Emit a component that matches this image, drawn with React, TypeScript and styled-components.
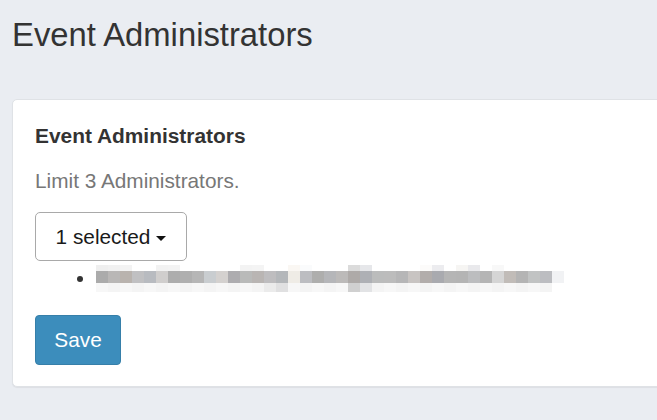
import React from "react";
import styled, { createGlobalStyle } from "styled-components";

const GlobalStyle = createGlobalStyle`
  html, body {
    margin: 0;
    padding: 0;
    background: #eaedf2;
    overflow: hidden;
  }
  body {
    font-family: "Liberation Sans", Arial, Helvetica, sans-serif;
  }
  * { box-sizing: border-box; }
`;

const Page = styled.div`
  height: 420px;
  padding: 17px 0 0 12px;
  overflow: hidden;
`;

const Title = styled.h1`
  margin: 0;
  font-size: 32.8px;
  line-height: 36px;
  font-weight: 400;
  color: #333;
`;

const Card = styled.section`
  margin-top: 46px;
  margin-right: -30px;
  background: #fff;
  border: 1px solid #dfe2e6;
  border-radius: 5px;
  box-shadow: 0 1px 1px rgba(0, 0, 0, 0.06);
  padding: 24px 0 21px 22px;
  display: flex;
  flex-direction: column;
  align-items: flex-start;
`;

const CardHeading = styled.h3`
  margin: 0;
  font-size: 20.9px;
  line-height: 24px;
  font-weight: 700;
  color: #333;
`;

const Hint = styled.p`
  margin: 21px 0 0;
  font-size: 20.8px;
  line-height: 24px;
  color: #777;
`;

const DropdownButton = styled.button`
  margin-top: 19px;
  width: 152px;
  height: 49px;
  display: flex;
  align-items: center;
  justify-content: center;
  gap: 6px;
  background: #fff;
  border: 1px solid #a9a9a9;
  border-radius: 5px;
  font-family: inherit;
  font-size: 20.8px;
  line-height: 24px;
  color: #1a1a1a;
  padding: 0;
  cursor: pointer;
`;

const Caret = styled.span`
  display: inline-block;
  width: 0;
  height: 0;
  margin-top: 3px;
  border-top: 5px solid #111;
  border-left: 5.5px solid transparent;
  border-right: 5.5px solid transparent;
`;

const SelectedList = styled.ul`
  margin: 4px 0 0;
  padding: 0;
  list-style: none;
`;

const SelectedItem = styled.li`
  display: flex;
  align-items: center;
  padding-left: 42px;
  height: 27px;
`;

const Bullet = styled.span`
  width: 6px;
  height: 6px;
  border-radius: 50%;
  background: #333;
  margin-right: 13px;
  flex: none;
`;

const SaveButton = styled.button`
  margin-top: 23px;
  width: 86px;
  height: 50px;
  background: #3c8dbc;
  border: 1px solid #367fa9;
  border-radius: 4px;
  color: #fff;
  font-family: inherit;
  font-size: 20.8px;
  line-height: 24px;
  padding: 0;
  cursor: pointer;
`;

const mid = [
  "#ababab", "#b9b7b6", "#b9b3ae", "#c0c0c2", "#b8bbc0", "#d0cecd", "#adadad",
  "#afafaf", "#b6b6b6", "#c9cdd0", "#d4d1cf", "#adacaf", "#b9bab9", "#b9b5b3",
  "#bebdbf", "#b4b7ba", "#efece6", "#bcbdc1", "#aeaead", "#b5b6b9", "#bcbab9",
  "#aeaaa8", "#aeb0b5", "#bbbcbc", "#bcbcbc", "#b6b6b7", "#c8c4c2", "#b2adab",
  "#a9aaaf", "#b5b5b5", "#b4b4b4", "#bcbdbf", "#b5b5b5", "#d5d5d5", "#c1bcb8",
  "#b4b4b4", "#c1c3c3", "#bcbdc1", "#f1f2f4",
];

const top: Record<number, string> = {
  0: "#efefef", 1: "#f1f1f1", 2: "#f3f3f3", 5: "#f2f2f2", 6: "#f3f3f3",
  12: "#f3f3f3", 13: "#f4f4f4", 16: "#faf7f3", 17: "#fafbfc", 21: "#dbdbdb",
  22: "#e6e7ea", 27: "#fcfbfa", 28: "#ececef", 30: "#f6f5f3", 31: "#e9e9ec",
  33: "#f8f8f8",
};

const bottom: Record<number, string> = {
  14: "#ebebeb", 15: "#e0e0e1", 21: "#d0d0d0", 22: "#e2e3e5", 38: "#ffffff",
};

const CELL = 12;

function RedactedEmail() {
  return (
    <svg width={mid.length * CELL} height={27} viewBox={`0 0 ${mid.length * CELL} 27`}>
      {mid.map((c, i) => (
        <g key={i}>
          <rect x={i * CELL} y={0} width={CELL} height={6} fill={top[i] ?? "#ffffff"} />
          <rect x={i * CELL} y={6} width={CELL} height={12} fill={c} />
          <rect
            x={i * CELL}
            y={18}
            width={CELL}
            height={9}
            fill={bottom[i] ?? (i % 2 ? "#f4f4f4" : "#f7f7f7")}
          />
        </g>
      ))}
    </svg>
  );
}

export default function App() {
  return (
    <>
      <GlobalStyle />
      <Page>
        <Title>Event Administrators</Title>
        <Card>
          <CardHeading>Event Administrators</CardHeading>
          <Hint>Limit 3 Administrators.</Hint>
          <DropdownButton type="button">
            1 selected <Caret />
          </DropdownButton>
          <SelectedList>
            <SelectedItem>
              <Bullet />
              <RedactedEmail />
            </SelectedItem>
          </SelectedList>
          <SaveButton type="button">Save</SaveButton>
        </Card>
      </Page>
    </>
  );
}
